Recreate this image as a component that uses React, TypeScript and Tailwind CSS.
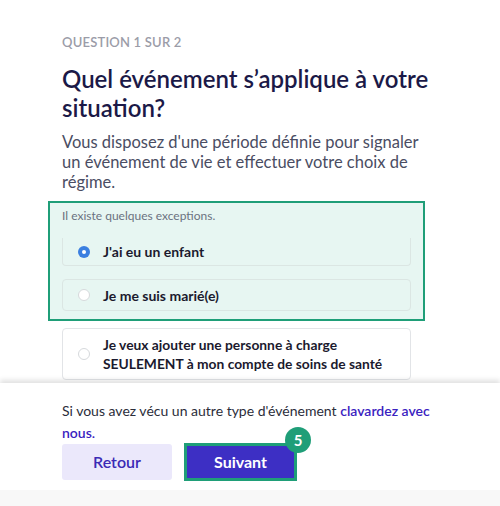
import React from 'react';

const font = { fontFamily: 'Lato, "Noto Sans", sans-serif' };

const Radio = ({ checked }: { checked?: boolean }) =>
  checked ? (
    <span className="flex h-[12px] w-[12px] shrink-0 items-center justify-center rounded-full bg-[#3b7fe0]">
      <span className="h-[4px] w-[4px] rounded-full bg-white" />
    </span>
  ) : (
    <span className="h-[12px] w-[12px] shrink-0 rounded-full border border-[#d6d9dc] bg-white" />
  );

export default function App() {
  return (
    <div className="flex h-[506px] w-[500px] flex-col overflow-hidden bg-white" style={font}>
      {/* contenu défilant */}
      <div className="h-[383px] shrink-0 overflow-hidden">
        <div className="px-[62px] pt-[34px]">
          <div className="text-[13px] font-semibold leading-[16px] tracking-[0.2px] text-[#9b9ca8]">QUESTION 1 SUR 2</div>
          <h1 className="mt-[14px] text-[24px] font-semibold leading-[29px] text-[#1b1947]">
            Quel événement s’applique à votre situation?
          </h1>
          <p className="mt-[10px] w-[375px] text-[16.5px] leading-[20px] text-[#4a4d63]">
            Vous disposez d'une période définie pour signaler un événement de vie et effectuer votre choix de régime.
          </p>
        </div>

        <div className="ml-[48px] mt-[9px] w-[377px] border-2 border-[#1f9e78] bg-[#e7f6f2] px-[12px] pb-[8px] pt-[5px]">
          <div className="text-[12px] leading-[16px] text-[#6b7280]">Il existe quelques exceptions.</div>
          <div className="mt-[14px] flex h-[28px] items-center gap-[13px] rounded-b-[4px] border-x border-b border-[#dbe6e3] pl-[15px]">
            <Radio checked />
            <span className="text-[14px] font-bold text-[#1b1a2e]">J'ai eu un enfant</span>
          </div>
          <div className="mt-[13px] flex h-[32px] items-center gap-[13px] rounded-[4px] border border-[#dbe6e3] pl-[15px]">
            <Radio />
            <span className="text-[14px] font-bold text-[#1b1a2e]">Je me suis marié(e)</span>
          </div>
        </div>

        <div className="ml-[62px] mt-[7px] flex h-[52px] w-[349px] items-center gap-[13px] rounded-[4px] border border-[#e2e4e7] pl-[15px]">
          <Radio />
          <span className="text-[13.8px] font-bold leading-[19px] text-[#1b1a2e]">
            Je veux ajouter une personne à charge
            <br />
            SEULEMENT à mon compte de soins de santé
          </span>
        </div>
      </div>

      {/* pied */}
      <div className="relative flex-1 bg-white shadow-[0_-3px_5px_rgba(0,0,0,0.12)]">
        <div className="px-[62px] pt-[17px]">
          <p className="text-[14px] leading-[22px] text-[#2b2d3a]">
            Si vous avez vécu un autre type d'événement{' '}
            <a className="font-semibold text-[#3a22c0]">clavardez avec nous.</a>
          </p>
          <div className="flex gap-[12px]">
            <button className="flex h-[36px] w-[110px] items-center justify-center rounded-[3px] bg-[#ebe8fb] text-[16px] font-semibold text-[#3b2ab5]">
              Retour
            </button>
            <div className="relative">
              <button className="flex h-[38px] w-[113px] -translate-y-[1px] items-center justify-center border-[3px] border-[#1f9e78] bg-[#3d2fc4] text-[16px] font-bold text-white">
                Suivant
              </button>
              <span className="absolute -right-[14px] -top-[17px] flex h-[26px] w-[26px] items-center justify-center rounded-full bg-[#1f9e78] text-[15px] font-bold text-white">
                5
              </span>
            </div>
          </div>
        </div>
        <div className="absolute bottom-0 left-0 right-0 h-[16px] bg-[#f8f8f8]" />
      </div>
    </div>
  );
}
